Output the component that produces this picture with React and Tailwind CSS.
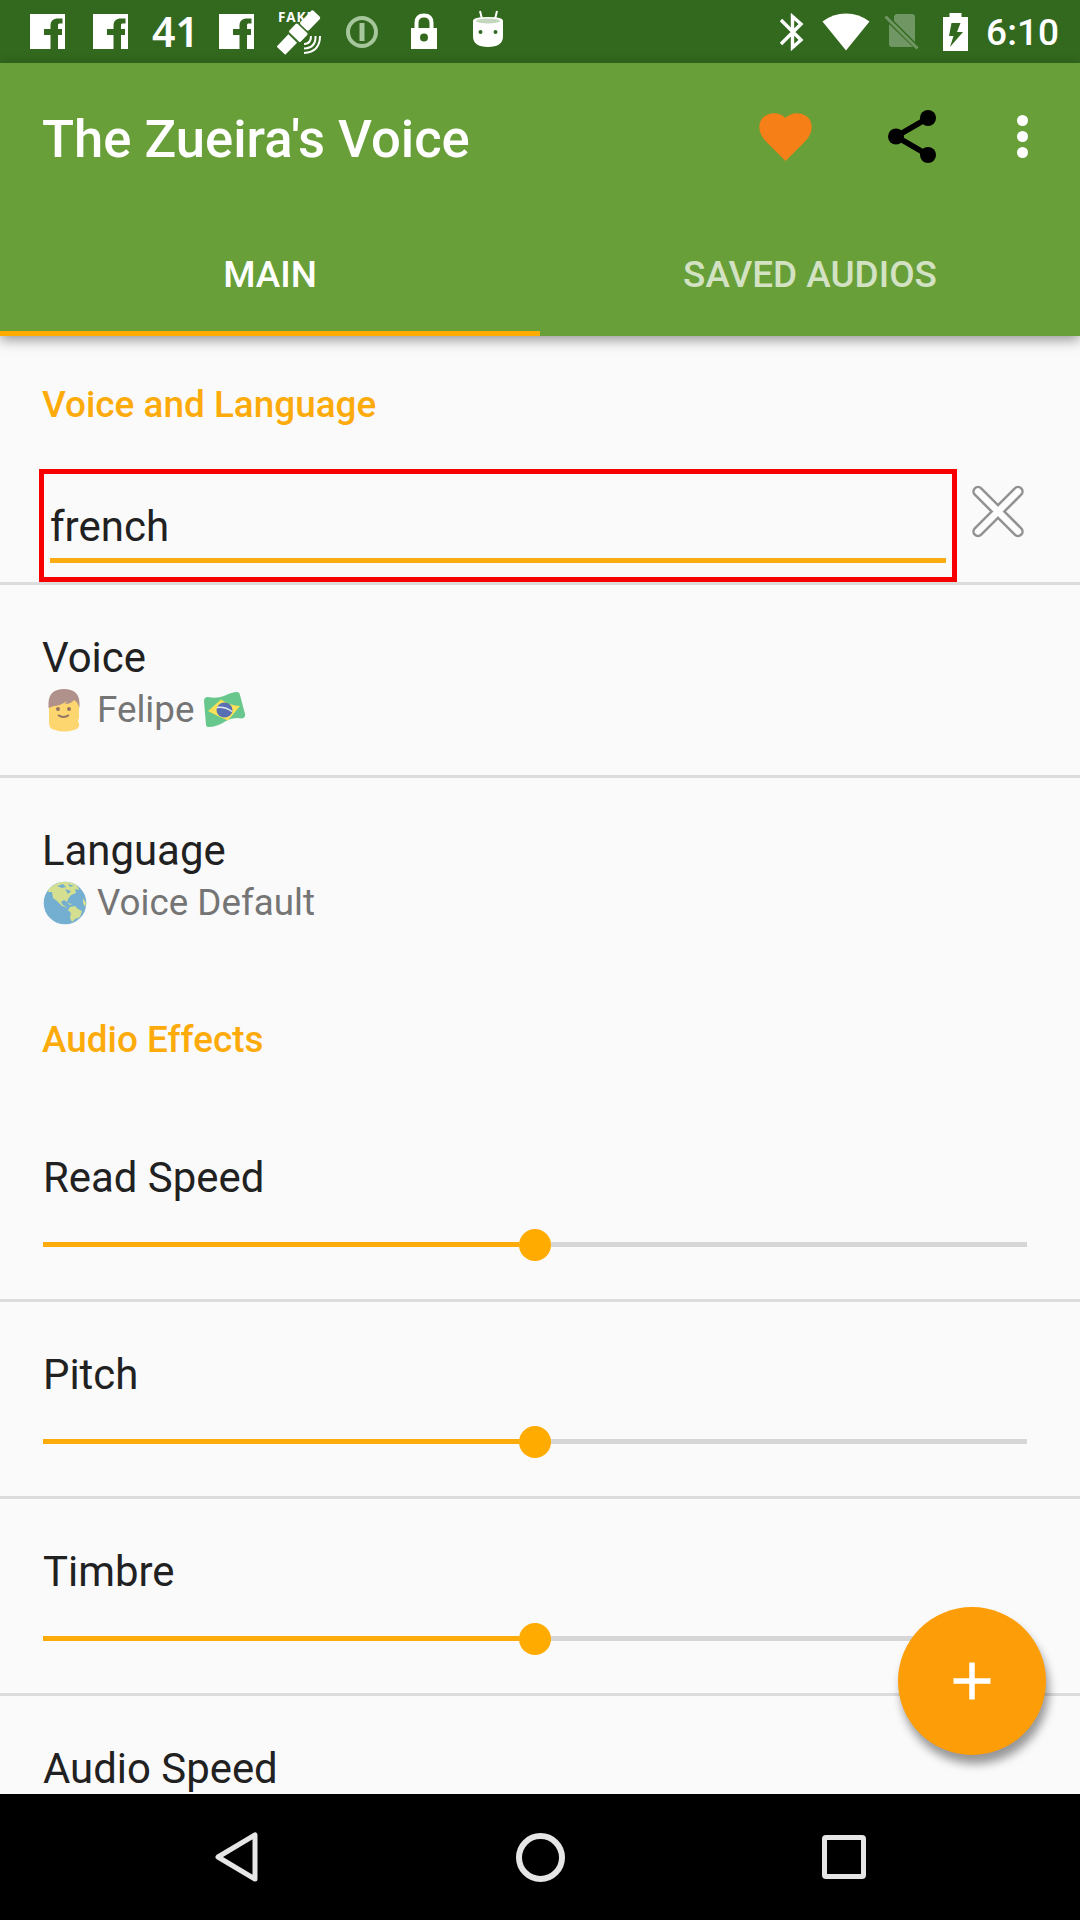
import React from "react";

function Facebook() {
  return (
    <svg width="35" height="35" viewBox="0 0 35 35">
      <path fill="#fff" d="M0 0H35V35H28V21H32V15H28V11.5C28 10 28.5 9.5 30 9.5H32.5V4.5H28C23.500 4.500 20.500 7 20.500 11.500V15H14V21H20.500V35H0Z" />
    </svg>
  );
}

function Satellite() {
  return (
    <svg width="46" height="54" viewBox="0 -5 46 54">
      <text x="1" y="12" fill="#fff" fontFamily="Open Sans, sans-serif" fontWeight="700" fontSize="13.500" textLength="36">FAKE</text>
      <g transform="translate(22 22) rotate(-46)">
        <rect x="-26" y="-6" width="17" height="12" fill="#fff" />
        <rect x="-7.500" y="-8.500" width="13" height="17" rx="2" fill="#fff" stroke="#33691e" strokeWidth="1" />
        <rect x="6.500" y="-6" width="19" height="12" rx="2" fill="#fff" />
      </g>
      <g fill="none" stroke="#fff" strokeWidth="2">
        <path d="M34 26Q34 34 27 34" />
        <path d="M38.500 26Q39 38 27 38.500" />
        <path d="M43 26Q43 42 27 43" />
      </g>
    </svg>
  );
}

function StatusBar() {
  return (
    <div className="flex h-[63px] shrink-0 items-center bg-[#33691e] pl-[30px] pr-[23px] text-white">
      <Facebook />
      <div className="w-[28px]" />
      <Facebook />
      <span className="ml-[24px] w-[47px] font-['Noto_Sans'] text-[41px] font-semibold leading-[63px]">41</span>
      <div className="w-[20px]" />
      <Facebook />
      <div className="w-[23px]" />
      <Satellite />
      <svg className="ml-[22px]" width="34" height="34" viewBox="0 0 34 34" fill="none" stroke="#a6c69b">
        <circle cx="17" cy="17" r="14" strokeWidth="4" />
        <path d="M17 8V26" strokeWidth="5" />
      </svg>
      <svg className="ml-[31px]" width="28" height="37" viewBox="0 0 28 37">
        <path d="M6.500 16V10Q6.500 2.500 14 2.500T21.500 10V16" fill="none" stroke="#fff" strokeWidth="4" />
        <path fill="#fff" fillRule="evenodd" d="M1 15H27V36H1ZM14 20.500A4 4 0 1 0 14 28.500A4 4 0 1 0 14 20.500Z" />
      </svg>
      <svg className="mb-[5px] ml-[34px]" width="32" height="38" viewBox="0 0 32 38">
        <path d="M8 1L10 9M25 1L23 9" stroke="#fff" strokeWidth="2" />
        <path fill="#fff" d="M1 11Q1 7 16 7T31 11V26Q31 37 16 37T1 26Z" />
        <ellipse cx="16" cy="11" rx="12" ry="2.500" fill="#c5d6be" />
        <circle cx="8.500" cy="22" r="2" fill="#33691e" />
        <circle cx="23.500" cy="22" r="2" fill="#33691e" />
      </svg>
      <div className="flex-1" />
      <svg width="24" height="38" viewBox="0 0 24 38" fill="none" stroke="#fff" strokeWidth="3.400">
        <path d="M1 7L21 27L12.500 34.500V3.500L21 11L1 31" />
      </svg>
      <svg className="ml-[18px]" width="48" height="38" viewBox="0 0 48 38">
        <path fill="#fff" d="M0.500 8.500Q11 0.500 24 0.500T47.500 8.500L24 37.500Z" />
      </svg>
      <svg className="ml-[14px]" width="35" height="37" viewBox="0 0 35 37">
        <path fill="#709664" d="M12 1H28Q31 1 31 4V29L10 8V3ZM5 11L29 34H8Q5 34 5 31Z" />
        <path d="M1.500 3.500L33.500 35.500" stroke="#709664" strokeWidth="3" />
      </svg>
      <svg className="ml-[24px]" width="25" height="38" viewBox="0 0 25 38">
        <path fill="#fff" fillRule="evenodd" d="M6.500 0H18.500V4H25V38H0V4H6.500ZM8.500 10L6 23H10.500L7 34L20 19H14L17.500 10Z" />
      </svg>
      <span className="ml-[18px] w-[71px] whitespace-nowrap pt-[2px] text-[37px] font-medium leading-[61px] tracking-[0.1px]">6:10</span>
    </div>
  );
}

function Toolbar() {
  return (
    <div className="flex h-[147px] items-center pl-[42px] pr-[52px]">
      <h1 className="flex-1 pt-[4px] text-[52.600px] font-medium leading-[60px] text-white">The Zueira's Voice</h1>
      <svg width="53" height="48" viewBox="0 0 53 48" fill="#f77f17">
        <path d="M26.500 48L7 28.500C-2 19 -1 9 4.500 4C11 -1.500 21 -1 26.500 5C32 -1 42 -1.500 48.500 4C54 9 55 19 46 28.500Z" />
      </svg>
      <svg className="ml-[76px]" width="48" height="53" viewBox="0 0 48 53">
        <path d="M40 8L8 26.500L40 45" fill="none" stroke="#000" strokeWidth="5.500" />
        <circle cx="40" cy="8" r="8" />
        <circle cx="8" cy="26.500" r="8" />
        <circle cx="40" cy="45" r="8" />
      </svg>
      <div className="ml-[81px] flex flex-col gap-[5px]">
        <i className="size-[11px] rounded-full bg-white" />
        <i className="size-[11px] rounded-full bg-white" />
        <i className="size-[11px] rounded-full bg-white" />
      </div>
    </div>
  );
}

function Boy() {
  return (
    <svg width="44" height="44" viewBox="0 0 44 44">
      <path fill="#fed670" d="M6 15Q21 0 36 15V30Q34 34 36 35Q37 41 31 42Q21 45 12 42Q6 41 6 35Z" />
      <path fill="#b0918b" d="M5.500 20V15Q6 1 21 1T36.500 15V20Q34 13 31 12Q28 16 22 16L24 13Q17 18 11 18Q8 19 5.500 20Z" />
      <circle cx="15" cy="21" r="2" fill="#937565" />
      <circle cx="26" cy="21" r="2" fill="#937565" />
      <path d="M15 27Q20.500 31 26 27" fill="none" stroke="#937565" strokeWidth="1.800" />
    </svg>
  );
}

function BrazilFlag() {
  return (
    <svg width="44" height="44" viewBox="0 0 44 44">
      <path fill="#68c78c" d="M1 13Q1 9 5 9Q13 11 21 8Q29 4 34 4Q36.500 4 37 7L42 26Q43 29 39 30.500Q30 29 23 33Q14 39 5 39Q3.500 39 3 37Z" />
      <path fill="#fbe158" d="M5 23L18 11.500Q27 18 37 18L25 32.500Q14 28 5 23Z" />
      <ellipse cx="21.500" cy="22" rx="8" ry="7.500" fill="#576fb3" />
      <path d="M14 19.500Q22 18.500 29 23.500" fill="none" stroke="#e6eaf3" strokeWidth="1.500" />
    </svg>
  );
}

function Globe() {
  return (
    <svg width="44" height="44" viewBox="0 0 44 44">
      <circle cx="22" cy="22" r="21.300" fill="#74afd1" />
      <g fill="#d4e08f">
        <path d="M6 8Q13 1 21 0.700Q29 1 34 4.500L36 9L32 8L33 12L28 14L25 18L24 21L21 19L18 21L20 24L25 27L19 25L14 20L10 17L9 11L5 11Z" />
        <path d="M27 26L32 25L35 28L39 30L37 36L32 38L29 41L27 37L28 32L25 29Z" />
        <path d="M24 22L29 23L27 24ZM40 17L43 22L42 26L40 22Z" />
      </g>
      <path d="M14 5L20 3L23 6L19 7ZM25 3L31 5L27 6ZM22 8L28 10L25 13Z" fill="#74afd1" />
    </svg>
  );
}

function SectionTitle({ className, children }) {
  return <h2 className={"flex shrink-0 items-center pl-[42px] text-[36.900px] font-medium text-[#fdab0a] " + className}>{children}</h2>;
}

function SearchRow() {
  return (
    <div className="flex h-[116px] shrink-0 items-start border-b-[3px] border-[#dcdcdc] pl-[39px]">
      <div className="h-[113px] w-[918px] border-[5px] border-[#f60000] px-[6px] pt-[30px]">
        <div className="h-[59px] border-b-[5px] border-[#faac12] text-[42px] leading-[46px] text-[#212121]">french</div>
      </div>
      <svg className="ml-[13px] mt-[15px]" width="54" height="55" viewBox="0 0 54 55" strokeLinecap="round">
        <path d="M8 7.500L48 47.500M48 7.500L8 47.500" stroke="#929292" strokeWidth="11.500" />
        <path d="M8 7.500L48 47.500M48 7.500L8 47.500" stroke="#fdfdfd" strokeWidth="6.500" />
      </svg>
    </div>
  );
}

function PreferenceRow({ label, divider, children }) {
  return (
    <div className={"shrink-0 pl-[42px] pt-[45px] " + (divider ? "h-[193px] border-b-[3px] border-[#dcdcdc]" : "h-[190px]")}>
      <div className="text-[41.900px] leading-[56px] text-[#212121]">{label}</div>
      <div className="flex h-[48px] items-center pl-[1px] text-[36.750px] leading-[48px] text-[#757575]">{children}</div>
    </div>
  );
}

function SliderRow({ label, divider = true }) {
  return (
    <div className={"h-[197px] shrink-0 pl-[43px] pr-[53px] pt-[45px] " + (divider ? "border-b-[3px] border-[#dcdcdc]" : "")}>
      <div className="text-[41.900px] leading-[56px] text-[#212121]">{label}</div>
      <div className="mt-[23px] flex h-[32px] items-center">
        <div className="mb-px h-[5px] w-[476px] bg-[#fdab0a]" />
        <div className="size-[32px] rounded-full bg-[#ffab00]" />
        <div className="mb-px h-[5px] flex-1 bg-[#d6d6d6]" />
      </div>
    </div>
  );
}

function NavBar() {
  return (
    <div className="flex h-[126px] shrink-0 items-center bg-black pl-[214px] pr-[214px]">
      <svg width="45" height="52" viewBox="0 0 45 52" fill="none" stroke="#e6e6e6" strokeWidth="5" strokeLinejoin="round">
        <path d="M41 4V48L4 26Z" />
      </svg>
      <div className="ml-[257px] size-[49px] rounded-full border-[6px] border-[#e6e6e6]" />
      <div className="ml-auto size-[44px] rounded-[4px] border-[5px] border-[#e6e6e6]" />
    </div>
  );
}

export default function App() {
  return (
    <div className="relative flex h-[1920px] w-[1080px] flex-col overflow-hidden bg-[#fafafa] font-[Roboto,sans-serif]">
      <StatusBar />
      <header className="relative z-10 h-[273px] shrink-0 bg-[#689f38] shadow-[0_4px_12px_rgba(0,0,0,0.4)]">
        <Toolbar />
        <nav className="grid h-[126px] grid-cols-2 text-center text-[36.900px] font-medium">
          <div className="border-b-[5px] border-[#ffab00] pt-[8px] leading-[113px] text-white">MAIN</div>
          <div className="pt-[8px] leading-[113px] text-[#d2e2c3]">SAVED AUDIOS</div>
        </nav>
      </header>
      <main className="flex h-[1458px] shrink-0 flex-col overflow-hidden">
        <SectionTitle className="h-[133px] pt-[4px]">Voice and Language</SectionTitle>
        <SearchRow />
        <PreferenceRow label="Voice" divider>
          <Boy />
          <span className="ml-[10px] mr-[9px]">Felipe</span>
          <BrazilFlag />
        </PreferenceRow>
        <PreferenceRow label="Language">
          <Globe />
          <span className="ml-[10px]">Voice Default</span>
        </PreferenceRow>
        <SectionTitle className="h-[137px] pt-[6px]">Audio Effects</SectionTitle>
        <SliderRow label="Read Speed" />
        <SliderRow label="Pitch" />
        <SliderRow label="Timbre" />
        <SliderRow label="Audio Speed" divider={false} />
      </main>
      <NavBar />
      <button className="absolute left-[898px] top-[1607px] flex size-[148px] items-center justify-center rounded-full bg-[#fd9d08] shadow-[3px_9px_10px_rgba(0,0,0,0.4)]">
        <svg width="38" height="38" viewBox="0 0 38 38" stroke="#fff" strokeWidth="5.500">
          <path d="M19 0.500V37.500M0.500 19H37.500" />
        </svg>
      </button>
    </div>
  );
}
